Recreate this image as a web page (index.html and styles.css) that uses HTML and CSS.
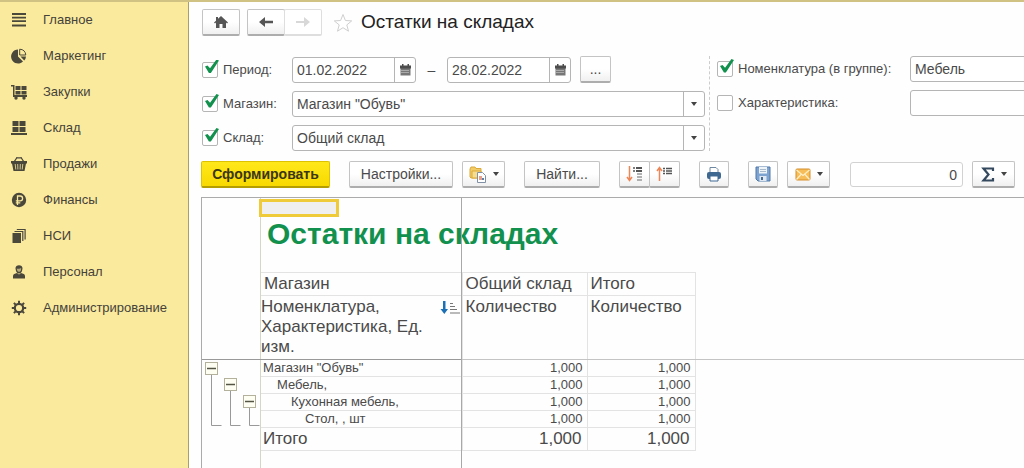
FILE: index.html
```html
<!DOCTYPE html>
<html lang="ru">
<head>
<meta charset="utf-8">
<title>Остатки на складах</title>
<link rel="stylesheet" href="styles.css">
</head>
<body>
<div class="app">
  <nav class="sidebar">
    <a class="nav-item" href="#"><svg class="nav-icon" viewBox="0 0 16 16"><path d="M1 1h14v2H1zM1 4.700h14v1.800H1zM1 8.300h14v1.800H1zM1 12.500h14v2H1z"/></svg>Главное</a>
    <a class="nav-item" href="#"><svg class="nav-icon" viewBox="0 0 16 16"><path d="M7 1.500V8.500l5 5A7 7 0 1 1 7 1.500z"/><path d="M8.700 1.200A6.500 6.500 0 0 1 14.800 7H8.700z" fill="none" stroke="#4a473b"/><path d="M9.500 8.500h5.500a6.500 6.500 0 0 1-1.800 4z"/></svg>Маркетинг</a>
    <a class="nav-item" href="#"><svg class="nav-icon" viewBox="0 0 16 16"><path d="M0 1h3.500v10H16v2H2V2.500H0zM4.500 2h5v4h-5zM10.500 2h5v4h-5zM4.500 7h5v3.500h-5zM10.500 7h5v3.500h-5z"/><circle cx="5" cy="14" r="1.700"/><circle cx="13" cy="14" r="1.700"/></svg>Закупки</a>
    <a class="nav-item" href="#"><svg class="nav-icon" viewBox="0 0 16 16"><path d="M1.500 1h6v5h-6zM8.500 1h6v5h-6zM1.500 7h6v5h-6zM8.500 7h6v5h-6zM0 13h16v2H0z"/></svg>Склад</a>
    <a class="nav-item" href="#"><svg class="nav-icon" viewBox="0 0 16 16"><path d="M3 6l3-4.500M13 6l-3-4.500M5.500 1.800h5" fill="none" stroke="#4a473b" stroke-width="1.300"/><path d="M0 5h16v2.500H0zM1 7.500h14L13.500 15h-11z"/><path d="M4.200 8l.6 5.500M6.700 8l.2 5.500M9.300 8l-.2 5.500M11.800 8l-.6 5.500" stroke="#faea9e" stroke-width=".8"/></svg>Продажи</a>
    <a class="nav-item" href="#"><svg class="nav-icon" viewBox="0 0 16 16"><circle cx="8" cy="8" r="7.200"/><path d="M6.500 13V4h2.700a2.400 2.400 0 0 1 0 4.800H4.800M4.800 10.800h4.500" fill="none" stroke="#faea9e" stroke-width="1.300"/></svg>Финансы</a>
    <a class="nav-item" href="#"><svg class="nav-icon" viewBox="0 0 16 16"><path d="M1.500 5h8.500v10H1.500z"/><path d="M3.500 3.500h8.300V13M5.800 1.500h8.300v10" fill="none" stroke="#4a473b" stroke-width="1.200"/></svg>НСИ</a>
    <a class="nav-item" href="#"><svg class="nav-icon" viewBox="0 0 16 16"><path d="M4.500 4.500C4 0 12 0 11.500 4.500L11 7c-.5 1.500-1.500 2.500-3 2.500S5.500 8.500 5 7zM2 14.500V12c0-2 2-2.500 4-3l2 1.500L10 9c2 .5 4 1 4 3v2.500z"/><path d="M5.700 4.500c1 .5 3.500.4 4.500-.5l-.3 2.500c-.7 1.700-3 1.700-3.700 0z" fill="#b5aa78"/></svg>Персонал</a>
    <a class="nav-item" href="#"><svg class="nav-icon" viewBox="0 0 16 16"><circle cx="8" cy="8" r="4.200" fill="none" stroke="#4a473b" stroke-width="2.200"/><path d="M8 .8v2.500M8 12.700v2.500M.8 8h2.500M12.700 8h2.500M2.900 2.900l1.800 1.800M11.300 11.300l1.800 1.800M2.900 13.100l1.800-1.800M11.300 4.700l1.800-1.800" stroke="#4a473b" stroke-width="2"/></svg>Администрирование</a>
  </nav>

  <main class="main">
    <header class="header">
      <button class="btn home" aria-label="Начальная страница"><svg width="16" height="14" viewBox="0 0 16 14"><path d="M8 1l7 6.500-1 1-1-.9V13H9.500V9h-3v4H3V7.600l-1 .9-1-1L3 5.700V2h2v1.800z" fill="#555"/></svg></button>
      <div class="group history">
        <button class="btn" aria-label="Назад"><svg width="16" height="12" viewBox="0 0 16 12"><path d="M1 6l6-5v3.700h8v2.600H7V11z" fill="#555"/></svg></button>
        <button class="btn off" aria-label="Вперед" disabled><svg width="16" height="12" viewBox="0 0 16 12"><path d="M15 6L9 1v4H1v2h8v4z" fill="#d8d8d8"/></svg></button>
      </div>
      <svg class="star" viewBox="0 0 20 20"><path d="M10 1.500l2.400 6 6.300.4-4.900 4 1.700 6.300L10 14.700l-5.500 3.500 1.700-6.300-4.900-4 6.300-.4z" fill="#fff" stroke="#cfcfcf"/></svg>
      <h1 class="title">Остатки на складах</h1>
    </header>

    <form class="filters">
      <div class="filters-left">
        <div class="field">
          <label class="caption"><input class="check" type="checkbox" checked>Период:</label>
          <div class="period">
            <span class="box date"><input type="text" value="01.02.2022" aria-label="Начало периода"><button type="button" class="drop" aria-label="Календарь"><svg width="11" height="12" viewBox="0 0 11 12"><path d="M.5 2h10v9.500H.5z" fill="#777"/><path d="M0 1.500h11v3H0zM2 0h1.500v2H2zM7.500 0H9v2H7.500z" fill="#4d4d4d"/><path d="M1.500 6.500h8M1.500 8.500h8" stroke="#ddd" stroke-dasharray="1 1"/></svg></button></span>
            <span class="dash">–</span>
            <span class="box date"><input type="text" value="28.02.2022" aria-label="Конец периода"><button type="button" class="drop" aria-label="Календарь"><svg width="11" height="12" viewBox="0 0 11 12"><path d="M.5 2h10v9.500H.5z" fill="#777"/><path d="M0 1.500h11v3H0zM2 0h1.500v2H2zM7.500 0H9v2H7.500z" fill="#4d4d4d"/><path d="M1.500 6.500h8M1.500 8.500h8" stroke="#ddd" stroke-dasharray="1 1"/></svg></button></span>
            <button type="button" class="btn more">...</button>
          </div>
        </div>
        <div class="field">
          <label class="caption"><input class="check" type="checkbox" checked>Магазин:</label>
          <span class="box"><select aria-label="Магазин"><option>Магазин "Обувь"</option></select><span class="drop"><i class="caret"></i></span></span>
        </div>
        <div class="field">
          <label class="caption"><input class="check" type="checkbox" checked>Склад:</label>
          <span class="box"><select aria-label="Склад"><option>Общий склад</option></select><span class="drop"><i class="caret"></i></span></span>
        </div>
      </div>
      <div class="filters-right">
        <div class="field">
          <label class="caption"><input class="check" type="checkbox" checked>Номенклатура (в группе):</label>
          <span class="box"><input type="text" value="Мебель" aria-label="Номенклатура"></span>
        </div>
        <div class="field">
          <label class="caption"><input class="check" type="checkbox">Характеристика:</label>
          <span class="box"><input type="text" aria-label="Характеристика"></span>
        </div>
      </div>
    </form>

    <div class="toolbar">
      <button class="btn primary">Сформировать</button>
      <button class="btn settings">Настройки...</button>
      <button class="btn menu variants" aria-label="Варианты отчета"><svg width="18" height="17" viewBox="0 0 18 17"><path d="M1 3l1-2h4l1 1.500h5V12H2L1 11z" fill="#f2cc66" stroke="#dba93a"/><path d="M3 5h9v7H3z" fill="#f7dc8d" stroke="#dba93a"/><path d="M8.500 6.500h5l3 3v7h-8z" fill="#fff" stroke="#8290a5"/><path d="M10 10h3v4h-3z" fill="#e8a18c"/><path d="M13 12h2v2h-2z" fill="#5d7fae"/></svg><i class="caret"></i></button>
      <button class="btn find">Найти...</button>
      <div class="group levels">
        <button class="btn" aria-label="Развернуть"><svg width="18" height="16" viewBox="0 0 18 16"><path d="M3.500 0v14M1 11l2.500 3.500L6 11" fill="none" stroke="#ed8657" stroke-width="1.500"/><path d="M7 2h2M7 5h2" stroke="#555" stroke-width="1.500"/><path d="M10 2h6M10 5h6" stroke="#555" stroke-width="1.800"/><path d="M11 8h5M11 11h5M11 14h5" stroke="#999" stroke-width="1.500"/></svg></button>
        <button class="btn" aria-label="Свернуть"><svg width="18" height="16" viewBox="0 0 18 16"><path d="M3.500 15V1.500M1 5l2.500-3.500L6 5" fill="none" stroke="#ed8657" stroke-width="1.500"/><path d="M7 2.500h2M7 5h2M7 7.500h2M10 2.500h6M10 5h6M10 7.500h6" stroke="#555" stroke-width="1.500"/></svg></button>
      </div>
      <button class="btn square" aria-label="Печать"><svg width="16" height="16" viewBox="0 0 16 16"><path d="M4 1.500h6l2 2V8H4z" fill="#fff" stroke="#6f87a0"/><rect x="1" y="6" width="14" height="7" rx="2" fill="#3f6890"/><path d="M4 10h8v5H4z" fill="#fff" stroke="#3f6890"/></svg></button>
      <button class="btn square" aria-label="Сохранить"><svg width="16" height="16" viewBox="0 0 16 16"><path d="M1 1h14v14H3l-2-2z" fill="#7fa3d0" stroke="#4f78a9"/><path d="M4 1h8v6.500H4z" fill="#eef3f8"/><path d="M5 3.500h6M5 5.500h6" stroke="#a8b9cc"/><path d="M4.500 10h7v5h-7z" fill="#dfe8f2"/><path d="M6 11h2v3H6z" fill="#44698f"/></svg></button>
      <button class="btn menu mail" aria-label="Отправить"><svg width="16" height="13" viewBox="0 0 16 13"><rect x="1" y="1" width="14" height="11" rx="1" fill="#f6bd58" stroke="#d58f2c"/><path d="M1.500 2L8 7.500 14.500 2M1.500 11.500L6 6.500M14.500 11.500L10 6.500" fill="none" stroke="#fff0c8" stroke-width="1.200"/></svg><i class="caret"></i></button>
      <input class="total" type="text" value="0" aria-label="Сумма">
      <button class="btn menu sum" aria-label="Вычислить"><svg width="14" height="15" viewBox="0 0 14 15"><path d="M12 4V1.500H2.500l5 6-5 6H12V11" fill="none" stroke="#34495e" stroke-width="2.200"/></svg><i class="caret"></i></button>
    </div>

    <section class="sheet">
      <div class="outline">
        <svg width="58" height="74" viewBox="0 0 58 74"><g fill="none" stroke="#999"><path d="M9.500 15.500v52h10M28.500 32.500v35h10M47.500 49.500v18h10"/></g><g fill="#fffef3" stroke="#b3b09c"><rect x="3.500" y="4.500" width="12" height="12"/><rect x="22.500" y="20.500" width="12" height="12"/><rect x="41.500" y="37.500" width="12" height="12"/></g><path d="M5 10.500h9M24 26.500h9M43 43.500h9" stroke="#555544" stroke-width="1.500"/></svg>
      </div>
      <div class="report">
        <div class="cell-cursor"></div>
        <h2 class="report-title">Остатки на складах</h2>
        <table class="grid">
          <colgroup><col class="c1"><col class="c2"><col class="c3"></colgroup>
          <thead>
            <tr><th>Магазин</th><th>Общий склад</th><th>Итого</th></tr>
            <tr class="tall"><th><div class="sorted">Номенклатура, Характеристика, Ед. изм.<svg class="sort" width="20" height="14" viewBox="0 0 20 14"><path d="M3 0h2.500v8H8l-3.700 5L.5 8H3z" fill="#1b6fb5"/><path d="M10 2.500h3M10 5.500h5M10 8.500h7M10 12h10" stroke="#777" stroke-width="1.200"/></svg></div></th><th>Количество</th><th>Количество</th></tr>
          </thead>
          <tbody>
            <tr><td>Магазин "Обувь"</td><td>1,000</td><td>1,000</td></tr>
            <tr><td class="level-1">Мебель,</td><td>1,000</td><td>1,000</td></tr>
            <tr><td class="level-2">Кухонная мебель,</td><td>1,000</td><td>1,000</td></tr>
            <tr><td class="level-3">Стол, , шт</td><td>1,000</td><td>1,000</td></tr>
          </tbody>
          <tfoot>
            <tr><td>Итого</td><td>1,000</td><td>1,000</td></tr>
          </tfoot>
        </table>
      </div>
      <div class="freeze-x"></div>
      <div class="freeze-y"></div>
    </section>
  </main>
</div>
</body>
</html>
```
FILE: styles.css
```css
* { box-sizing: border-box; }

body {
  margin: 0;
  font: 14px/16px "Liberation Sans", Arial, sans-serif;
  color: #4a4a4a;
  background: #fefefe;
}

button, input, select { font: inherit; color: inherit; }

.app {
  display: flex;
  height: 100vh;
  overflow: hidden;
  border-top: 2px solid #cfc283;
}

/* Sections panel */
.sidebar {
  flex: none;
  width: 189px;
  background: #faea9e;
  border-right: 1px solid #a9a067;
}
.nav-item {
  display: flex;
  align-items: center;
  gap: 16px;
  height: 36px;
  padding-left: 11px;
  font-size: 13px;
  color: #45423a;
  text-decoration: none;
}
.nav-icon { width: 16px; height: 16px; fill: #4a473b; }

.main {
  flex: 1;
  min-width: 0;
  display: flex;
  flex-direction: column;
  padding-left: 12px;
}

/* Buttons */
.btn {
  display: flex;
  flex: none;
  align-items: center;
  justify-content: center;
  height: 27px;
  padding: 0;
  border: 1px solid #c4c4c4;
  border-bottom: 2px solid #adadad;
  border-radius: 2px;
  background: linear-gradient(#fff 50%, #f0f0f0);
}
.off { border-color: #dedede; background: #fff; }
.group { display: flex; }
.group .btn + .btn { margin-left: -1px; }
.caret {
  border: 3px solid transparent;
  border-top: 4px solid #444;
  border-bottom: 0;
}

/* Form header */
.header {
  display: flex;
  align-items: center;
  padding: 7px 0 0 1px;
}
.home { width: 38px; }
.history { margin-left: 7px; }
.history .btn { width: 38px; }
.star { width: 20px; height: 20px; margin-left: 11px; }
.title {
  margin: 0 0 0 8px;
  font-size: 19px;
  line-height: 24px;
  padding-bottom: 2px;
  font-weight: normal;
  color: #222;
}

/* Filters */
.filters { display: flex; padding: 20px 0 0 1px; }
.filters-left {
  flex: 1;
  display: flex;
  flex-direction: column;
  gap: 8px;
  padding-right: 4px;
}
.filters-right {
  flex: none;
  width: 315px;
  display: flex;
  flex-direction: column;
  gap: 8px;
  padding-left: 7px;
  border-left: 1px dashed #ccc;
}
.field { display: flex; align-items: center; }
.caption {
  display: flex;
  flex: none;
  align-items: center;
  gap: 5px;
  width: 90px;
  font-size: 13px;
  white-space: nowrap;
}
.filters-right .caption { width: 193px; }
.filters-right .box { margin-right: -8px; }
.check {
  appearance: none;
  position: relative;
  width: 16px;
  height: 16px;
  margin: 0;
  border: 1px solid #b5b5b5;
  border-radius: 2px;
  background: #fff;
}
.check:checked::before {
  content: "";
  position: absolute;
  left: 2px;
  top: -3px;
  width: 14px;
  height: 14px;
  background: #12914e;
  clip-path: polygon(0 50%, 18% 42%, 36% 62%, 82% 0, 100% 8%, 42% 96%, 28% 96%);
}
.box {
  display: flex;
  flex: 1;
  min-width: 0;
  height: 26px;
  border: 1px solid #b5b5b5;
  border-radius: 3px;
  background: #fff;
}
.box input, .box select {
  appearance: none;
  flex: 1;
  min-width: 0;
  padding: 0 4px;
  border: 0;
  background: none;
}
.drop {
  display: flex;
  flex: none;
  align-items: center;
  justify-content: center;
  width: 21px;
  padding: 0;
  border: 0;
  border-left: 1px solid #b5b5b5;
  background: none;
}
.period { display: flex; align-items: center; }
.date { flex: none; width: 124px; }
.dash { width: 31px; text-align: center; }
.more { width: 31px; margin-left: 9px; }

/* Command bar */
.toolbar { display: flex; align-items: center; padding-top: 10px; }
.primary {
  width: 129px;
  border-color: #dcc200;
  border-bottom-color: #b39d00;
  background: linear-gradient(#ffe81a, #f8d900);
  font-weight: bold;
  color: #3b3615;
}
.menu { gap: 6px; width: 43px; }
.settings { width: 104px; margin-left: 19px; }
.variants { margin-left: 9px; }
.find { width: 76px; margin-left: 19px; }
.levels { margin-left: 19px; }
.levels .btn { width: 31px; }
.square { width: 30px; margin-left: 19px; }
.mail { margin-left: 9px; }
.total {
  width: 113px;
  height: 25px;
  margin-left: 20px;
  padding: 0 5px;
  border: 1px solid #d2d2d2;
  border-radius: 3px;
  background: #fff;
  text-align: right;
}
.sum { margin-left: 9px; }

/* Spreadsheet */
.sheet {
  position: relative;
  flex: 1;
  display: flex;
  margin-top: 9px;
  border: 1px solid #ababab;
  border-width: 1px 0 0 1px;
  overflow: hidden;
}
.outline {
  flex: none;
  width: 59px;
  padding-top: 160px;
  border-right: 1px solid #d5d5c8;
}
.cell-cursor {
  position: relative;
  width: 80px;
  height: 18px;
  margin: 1px 0 0 -2px;
  border: 3px solid #efcb3a;
  background: #efefef;
}
.report-title {
  margin: 0;
  padding-left: 6px;
  font-size: 30px;
  line-height: 34px;
  height: 55px;
  color: #12914e;
  white-space: nowrap;
}
.grid {
  width: 434px;
  table-layout: fixed;
  border-collapse: collapse;
  font-size: 13px;
}
.c1 { width: 201px; }
.c2 { width: 125px; }
.c3 { width: 108px; }
.grid th, .grid td {
  height: 17px;
  padding: 0 4px 0 2px;
  border: 1px solid #e3e3e3;
  border-left-width: 0;
  line-height: 16px;
  text-align: right;
  white-space: nowrap;
}
.grid th {
  height: 23px;
  padding: 1px 3px;
  font-size: 17px;
  line-height: 20px;
  font-weight: normal;
  text-align: left;
  vertical-align: top;
}
.grid .tall th:first-child { padding: 1px 0; }
.grid .tall th { height: 64px; white-space: normal; }
.grid td:first-child { text-align: left; }
.grid .level-1 { padding-left: 16px; }
.grid .level-2 { padding-left: 30px; }
.grid .level-3 { padding-left: 44px; }
.grid tfoot td { height: 23px; padding: 0 5px 0 2px; font-size: 17px; }
.sorted { position: relative; padding-right: 26px; }
.sort { position: absolute; right: 2px; top: 4px; }
.freeze-x, .freeze-y { position: absolute; background: #a8a8a8; }
.freeze-x {
  left: 0;
  right: 0;
  top: 161px;
  height: 1px;
  background: linear-gradient(90deg, #999 260px, #c4c4c4 260px);
}
.freeze-y { left: 259px; top: 0; bottom: 0; width: 1px; }
```
